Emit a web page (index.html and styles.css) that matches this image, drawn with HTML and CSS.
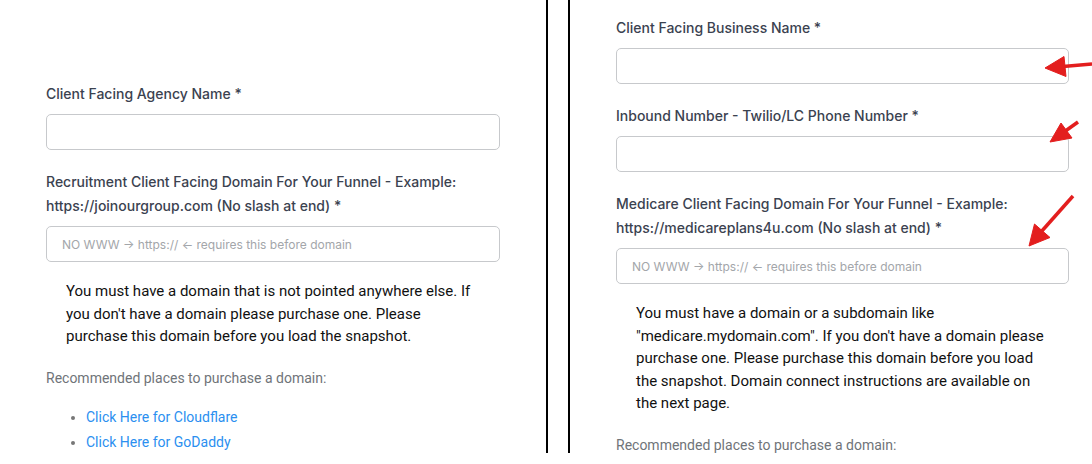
FILE: index.html
```html
<!DOCTYPE html>
<html lang="en">
<head>
  <meta charset="UTF-8">
  <meta name="viewport" content="width=device-width, initial-scale=1.0">
  <title>Snapshot Setup</title>
  <link rel="stylesheet" href="styles.css">
</head>
<body>
  <!-- Recruitment form -->
  <div class="panel panel-left">
    <div class="field">
      <label class="label">Client Facing Agency Name *</label>
      <input class="input" type="text">
    </div>

    <div class="field">
      <label class="label">Recruitment Client Facing Domain For Your Funnel - Example: https://joinourgroup.com (No slash at end) *</label>
      <input class="input" type="text" placeholder="NO WWW → https:// ← requires this before domain">
    </div>

    <p class="note">You must have a domain that is not pointed anywhere else. If you don't have a domain please purchase one. Please purchase this domain before you load the snapshot.</p>

    <p class="muted">Recommended places to purchase a domain:</p>
    <ul class="links">
      <li><a href="#">Click Here for Cloudflare</a></li>
      <li><a href="#">Click Here for GoDaddy</a></li>
    </ul>
  </div>

  <!-- Medicare form -->
  <div class="panel panel-right">
    <div class="field">
      <label class="label">Client Facing Business Name *</label>
      <input class="input" type="text">
    </div>

    <div class="field">
      <label class="label">Inbound Number - Twilio/LC Phone Number *</label>
      <input class="input" type="text">
    </div>

    <div class="field">
      <label class="label">Medicare Client Facing Domain For Your Funnel - Example: https://medicareplans4u.com (No slash at end) *</label>
      <input class="input" type="text" placeholder="NO WWW → https:// ← requires this before domain">
    </div>

    <p class="note">You must have a domain or a subdomain like "medicare.mydomain.com". If you don't have a domain please purchase one. Please purchase this domain before you load the snapshot. Domain connect instructions are available on the next page.</p>

    <p class="muted">Recommended places to purchase a domain:</p>
  </div>

  <!-- red annotation arrows -->
  <svg class="arrows" viewBox="0 0 1092 464" width="1092" height="464">
    <g fill="#e31e1e" stroke="#e31e1e">
      <line x1="1092" y1="64" x2="1063" y2="66.5" stroke-width="3.5"/>
      <polygon points="1045,68 1064,56.5 1066,76.5" stroke-width="1"/>
      <line x1="1078" y1="122" x2="1064" y2="132" stroke-width="3.5"/>
      <polygon points="1050,142 1061,123 1072,138" stroke-width="1"/>
      <line x1="1073" y1="196" x2="1041" y2="232" stroke-width="3.5"/>
      <polygon points="1029,246 1034.5,224 1050,237.5" stroke-width="1"/>
    </g>
  </svg>
</body>
</html>
```

FILE: styles.css
```css
/* Page */
body {
  margin: 0;
  padding: 0;
  width: 1092px;
  height: 464px;
  display: flex;
  align-items: flex-start;
  gap: 20px;
  background-color: #fff;
  overflow: hidden;
  position: relative;
  font-family: Inter, "Liberation Sans", sans-serif;
}

/* Two side-by-side screenshots with black edges */
.panel {
  box-sizing: border-box;
  flex-shrink: 0;
  height: 453px;
  overflow: hidden;
  background: #fff;
}

.panel-left {
  width: 548px;
  padding: 82px 46px 0;
  border-right: 2px solid #000;
}

.panel-right {
  width: 524px;
  padding: 16px 23px 0 46px;
  border-left: 2px solid #000;
}

/* Form fields */
.field {
  display: flex;
  flex-direction: column;
  gap: 8px;
  margin-bottom: 20px;
}

.label {
  font-size: 14px;
  line-height: 24px;
  font-weight: 500;
  color: #3b4250;
}

.input {
  box-sizing: border-box;
  width: 100%;
  height: 36px;
  padding: 0 15px;
  border: 1px solid #c7c9cc;
  border-radius: 5px;
  font-family: Inter, "Liberation Sans", sans-serif;
  font-size: 12px;
  background: #fff;
}

.input::placeholder {
  color: #a3a6aa;
}

/* Help text */
.note {
  margin: -2px 0 0;
  padding: 0 20px;
  font-family: Roboto, "Liberation Sans", sans-serif;
  font-size: 15px;
  line-height: 22.5px;
  color: #111;
}

.muted {
  margin: 20px 0 0;
  font-family: Roboto, "Liberation Sans", sans-serif;
  font-size: 14px;
  line-height: 21px;
  color: #6f7479;
}

.links {
  margin: 16px 0 0;
  padding-left: 40px;
  font-family: Roboto, "Liberation Sans", sans-serif;
  font-size: 14px;
  line-height: 25px;
}

.links li::marker {
  color: #777;
}

.links a {
  color: #2b8ff0;
  text-decoration: none;
}

.arrows {
  position: absolute;
  top: 0;
  left: 0;
  pointer-events: none;
}
```
